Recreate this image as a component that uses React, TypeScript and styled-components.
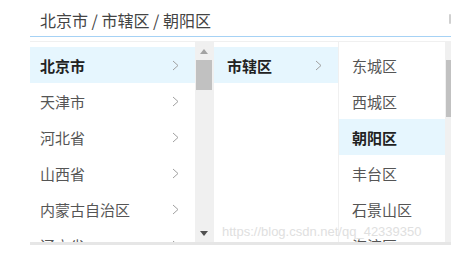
import styled, { createGlobalStyle } from "styled-components";

const GlobalStyle = createGlobalStyle`
  html, body {
    margin: 0;
    padding: 0;
    background: #fff;
  }
  body {
    font-family: "Microsoft YaHei", "Noto Sans CJK SC", "Noto Sans", sans-serif;
    width: 475px;
    height: 253px;
    overflow: hidden;
  }
`;

const Page = styled.div`
  position: relative;
  width: 475px;
  height: 253px;
  padding-left: 30px;
  box-sizing: border-box;
`;

const InputBox = styled.div`
  width: 421px;
  height: 37px;
  box-sizing: border-box;
  border-bottom: 1px solid #a6d2f5;
  display: flex;
  align-items: center;
  justify-content: space-between;
  padding: 3px 0 0 10px;
  font-size: 16px;
  color: #444;
`;

const ArrowStub = styled.span`
  width: 2px;
  height: 10px;
  border-radius: 1px;
  background: #d0d0d0;
  margin-top: -1px;
`;

const Dropdown = styled.div`
  margin-top: 4px;
  width: 421px;
  height: 204px;
  box-sizing: border-box;
  border-top: 1px solid #f0f0f0;
  border-bottom: 3px solid #e6e6e6;
  display: flex;
  overflow: hidden;
`;

const Menu = styled.div<{ $width: number }>`
  width: ${(p) => p.$width}px;
  flex-shrink: 0;
  display: flex;
  border-right: 1px solid #f0f0f0;
  overflow: hidden;
`;

const List = styled.ul`
  flex: 1;
  margin: 0;
  padding: 5px 0 0;
  list-style: none;
  overflow: hidden;
`;

const Item = styled.li<{ $active?: boolean; $pad: number }>`
  height: 36px;
  display: flex;
  align-items: center;
  justify-content: space-between;
  padding: 0 16px 0 ${(p) => p.$pad}px;
  font-size: 15px;
  white-space: nowrap;
  color: ${(p) => (p.$active ? "#222" : "#555")};
  font-weight: ${(p) => (p.$active ? 700 : 400)};
  background: ${(p) => (p.$active ? "#e6f6fe" : "transparent")};
`;

const Track = styled.div<{ $width: number }>`
  width: ${(p) => p.$width}px;
  flex-shrink: 0;
  background: #f0f0f0;
  display: flex;
  flex-direction: column;
  align-items: center;
`;

const ArrowBtn = styled.div`
  height: 18px;
  width: 100%;
  display: flex;
  align-items: center;
  justify-content: center;
`;

const Thumb = styled.div<{ $height: number }>`
  width: calc(100% - 2px);
  height: ${(p) => p.$height}px;
  background: #c1c1c1;
  margin-left: 1px;
  align-self: flex-start;
`;

const Spacer = styled.div`
  flex: 1;
`;

const Watermark = styled.div`
  position: absolute;
  left: 222px;
  top: 224px;
  font-family: "Liberation Sans", Arial, sans-serif;
  font-size: 13px;
  color: #e0e0e0;
  white-space: nowrap;
`;

const Chevron = () => (
  <svg width="7" height="11" viewBox="0 0 7 11">
    <path d="M1 1l5 4.5L1 10" fill="none" stroke="#a0a0a0" strokeWidth="1" />
  </svg>
);

const Up = () => (
  <svg width="8" height="5" viewBox="0 0 8 5">
    <path d="M0 5L4 0l4 5z" fill="#a3a3a3" />
  </svg>
);

const Down = () => (
  <svg width="8" height="5" viewBox="0 0 8 5">
    <path d="M0 0h8L4 5z" fill="#505050" />
  </svg>
);

const provinces = ["北京市", "天津市", "河北省", "山西省", "内蒙古自治区", "辽宁省"];
const cities = ["市辖区"];
const districts = ["东城区", "西城区", "朝阳区", "丰台区", "石景山区", "海淀区"];

export default function App() {
  return (
    <>
      <GlobalStyle />
      <Page>
        <InputBox>
          <span>北京市 / 市辖区 / 朝阳区</span>
          <ArrowStub />
        </InputBox>
        <Dropdown>
          <Menu $width={183}>
            <List>
              {provinces.map((p, i) => (
                <Item key={p} $active={i === 0} $pad={10}>
                  {p}
                  <Chevron />
                </Item>
              ))}
            </List>
            <Track $width={18}>
              <ArrowBtn>
                <Up />
              </ArrowBtn>
              <Thumb $height={30} />
              <Spacer />
              <ArrowBtn>
                <Down />
              </ArrowBtn>
            </Track>
          </Menu>
          <Menu $width={124}>
            <List>
              {cities.map((c) => (
                <Item key={c} $active $pad={13}>
                  {c}
                  <Chevron />
                </Item>
              ))}
            </List>
          </Menu>
          <Menu $width={114}>
            <List>
              {districts.map((d, i) => (
                <Item key={d} $active={i === 2} $pad={13}>
                  {d}
                </Item>
              ))}
            </List>
            <Track $width={8}>
              <ArrowBtn />
              <Thumb $height={57} />
            </Track>
          </Menu>
        </Dropdown>
        <Watermark>https://blog.csdn.net/qq_42339350</Watermark>
      </Page>
    </>
  );
}
